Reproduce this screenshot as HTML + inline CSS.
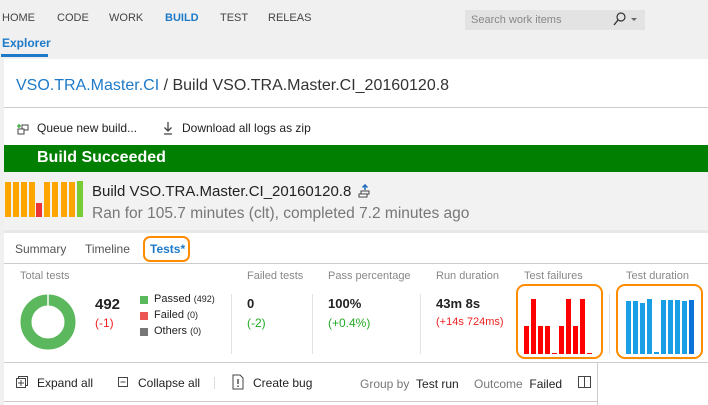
<!DOCTYPE html>
<html><head><meta charset="utf-8"><style>
*{margin:0;padding:0;box-sizing:border-box}
body{width:708px;height:405px;overflow:hidden;background:#f0f0f0;font-family:"Segoe UI","Liberation Sans",sans-serif;position:relative;color:#222}
.a{position:absolute;white-space:nowrap}
.nav{font-size:11px;color:#444;top:12px}
</style></head><body>
<div class="a nav" style="left:2px">HOME</div>
<div class="a nav" style="left:57px">CODE</div>
<div class="a nav" style="left:109px">WORK</div>
<div class="a nav" style="left:165px;color:#1e7ac8;font-weight:bold">BUILD</div>
<div class="a nav" style="left:220px">TEST</div>
<div class="a nav" style="left:268px">RELEAS</div>
<div class="a" style="left:465px;top:10px;width:180px;height:20px;background:#e3e3e3"></div>
<div class="a" style="left:471px;top:14px;font-size:11px;color:#888">Search work items</div>
<svg class="a" style="left:612px;top:11px" width="30" height="16"><circle cx="9" cy="6" r="4" fill="none" stroke="#333" stroke-width="1.2"/><line x1="6" y1="9" x2="2" y2="14" stroke="#333" stroke-width="1.4"/><path d="M19 7h6l-3 3z" fill="#666"/></svg>
<div class="a" style="left:2px;top:36px;font-size:12px;font-weight:bold;color:#1e7ac8">Explorer</div>
<div class="a" style="left:1px;top:54px;width:47px;height:3px;background:#1e7ac8"></div>
<div class="a" style="left:4px;top:59px;width:704px;height:346px;background:#fff"></div>
<div class="a" style="left:16px;top:77px;font-size:16px;color:#333"><span style="color:#1e7ac8">VSO.TRA.Master.CI</span> / Build VSO.TRA.Master.CI_20160120.8</div>
<div class="a" style="left:4px;top:107px;width:704px;height:1px;background:#ccc"></div>
<svg class="a" style="left:16px;top:122px" width="14" height="14"><path d="M1 4h4M3 2v4" stroke="#3a3" stroke-width="1.3"/><rect x="6" y="3" width="6" height="5" fill="none" stroke="#444"/><rect x="2" y="7" width="6" height="5" fill="#fff" stroke="#444"/></svg>
<div class="a" style="left:37px;top:121px;font-size:12px">Queue new build...</div>
<svg class="a" style="left:163px;top:121px" width="10" height="14"><path d="M5 1v9M1.5 6.5L5 10l3.5-3.5M1 13h8" stroke="#444" stroke-width="1.3" fill="none"/></svg>
<div class="a" style="left:182px;top:121px;font-size:12px">Download all logs as zip</div>
<div class="a" style="left:4px;top:145px;width:704px;height:27px;background:#007f00"></div>
<div class="a" style="left:37px;top:149px;font-size:16px;font-weight:bold;color:#fff">Build Succeeded</div>
<div class="a" style="left:4px;top:172px;width:704px;height:58px;background:#f2f2f2"></div>
<div class="a" style="left:5px;top:181px;width:80px;height:36px">
<div class="a" style="left:0;top:1px;width:6px;height:35px;background:#ffa500"></div>
<div class="a" style="left:8px;top:1px;width:6px;height:35px;background:#ffa500"></div>
<div class="a" style="left:16px;top:1px;width:6px;height:35px;background:#ffa500"></div>
<div class="a" style="left:24px;top:1px;width:6px;height:35px;background:#ffa500"></div>
<div class="a" style="left:31px;top:22px;width:6px;height:14px;background:#e33"></div>
<div class="a" style="left:39px;top:1px;width:6px;height:35px;background:#ffa500"></div>
<div class="a" style="left:47px;top:1px;width:6px;height:35px;background:#ffa500"></div>
<div class="a" style="left:56px;top:1px;width:6px;height:35px;background:#ffa500"></div>
<div class="a" style="left:64px;top:1px;width:6px;height:35px;background:#ffa500"></div>
<div class="a" style="left:72px;top:0;width:6px;height:36px;background:#7c3"></div>
</div>
<div class="a" style="left:92px;top:183px;font-size:15px;color:#222">Build VSO.TRA.Master.CI_20160120.8</div>
<svg class="a" style="left:358px;top:184px" width="14" height="16"><path d="M7 1v5M4.5 3.5L7 1l2.5 2.5" stroke="#1e6cb8" stroke-width="1.5" fill="none"/><rect x="3" y="7" width="8" height="3" fill="none" stroke="#444"/><rect x="1" y="10" width="8" height="3" fill="#fff" stroke="#444"/></svg>
<div class="a" style="left:92px;top:205px;font-size:15.5px;color:#777">Ran for 105.7 minutes (clt), completed 7.2 minutes ago</div>
<div class="a" style="left:4px;top:230px;width:704px;height:3px;background:#e8e8e8"></div>
<div class="a" style="left:15px;top:242px;font-size:12px;color:#555">Summary</div>
<div class="a" style="left:85px;top:242px;font-size:12px;color:#555">Timeline</div>
<div class="a" style="left:143px;top:236px;width:47px;height:26px;border:2px solid #ff8c00;border-radius:7px"></div>
<div class="a" style="left:150px;top:242px;font-size:12px;font-weight:bold;color:#1e7ac8">Tests*</div>
<div class="a" style="left:4px;top:263px;width:704px;height:1px;background:#ccc"></div>
<div class="a" style="left:20px;top:270px;font-size:11px;color:#888">Total tests</div>
<svg class="a" style="left:20px;top:294px" width="56" height="56"><circle cx="28" cy="28" r="22" fill="none" stroke="#5cb85c" stroke-width="11"/><line x1="28" y1="0" x2="28" y2="12" stroke="#fff" stroke-width="1.5"/></svg>
<div class="a" style="left:95px;top:296px;font-size:15px;font-weight:bold">492</div>
<div class="a" style="left:95px;top:316px;font-size:12px;color:#e22">(-1)</div>
<div class="a" style="left:140px;top:296px;width:8px;height:8px;background:#5cb85c"></div>
<div class="a" style="left:140px;top:312px;width:8px;height:8px;background:#ed5454"></div>
<div class="a" style="left:140px;top:328px;width:8px;height:8px;background:#777"></div>
<div class="a" style="left:154px;top:293px;font-size:11px">Passed <span style="font-size:9px">(492)</span></div>
<div class="a" style="left:154px;top:309px;font-size:11px">Failed <span style="font-size:9px">(0)</span></div>
<div class="a" style="left:154px;top:325px;font-size:11px">Others <span style="font-size:9px">(0)</span></div>
<div class="a" style="left:231px;top:294px;width:1px;height:60px;background:#e3e3e3"></div>
<div class="a" style="left:312px;top:294px;width:1px;height:60px;background:#e3e3e3"></div>
<div class="a" style="left:420px;top:294px;width:1px;height:60px;background:#e3e3e3"></div>
<div class="a" style="left:609px;top:294px;width:1px;height:60px;background:#e3e3e3"></div>
<div class="a" style="left:247px;top:270px;font-size:11px;color:#888">Failed tests</div>
<div class="a" style="left:247px;top:296px;font-size:13px;font-weight:bold">0</div>
<div class="a" style="left:247px;top:316px;font-size:12px;color:#2a2">(-2)</div>
<div class="a" style="left:328px;top:270px;font-size:11px;color:#888">Pass percentage</div>
<div class="a" style="left:328px;top:296px;font-size:13px;font-weight:bold">100%</div>
<div class="a" style="left:328px;top:316px;font-size:12px;color:#2a2">(+0.4%)</div>
<div class="a" style="left:436px;top:270px;font-size:11px;color:#888">Run duration</div>
<div class="a" style="left:436px;top:296px;font-size:13px;font-weight:bold">43m 8s</div>
<div class="a" style="left:436px;top:316px;font-size:11px;color:#e22">(+14s 724ms)</div>
<div class="a" style="left:524px;top:270px;font-size:11px;color:#888">Test failures</div>
<div class="a" style="left:626px;top:270px;font-size:11px;color:#888">Test duration</div>
<div class="a" style="left:516px;top:284px;width:87px;height:75px;border:2px solid #ff8c00;border-radius:9px"></div>
<div class="a" style="left:616px;top:284px;width:87px;height:75px;border:2px solid #ff8c00;border-radius:9px"></div>
<svg class="a" style="left:524px;top:296px" width="80" height="60">
<g fill="#f00"><rect x="0" y="30" width="5" height="28"/><rect x="7" y="3" width="5" height="55"/><rect x="14" y="30" width="5" height="28"/><rect x="21" y="30" width="5" height="28"/><rect x="28" y="57" width="5" height="1"/><rect x="35" y="30" width="5" height="28"/><rect x="42" y="3" width="5" height="55"/><rect x="49" y="30" width="5" height="28"/><rect x="56" y="3" width="5" height="55"/><rect x="63" y="57" width="5" height="1"/></g></svg>
<svg class="a" style="left:626px;top:296px" width="80" height="60">
<g fill="#1a9ee6"><rect x="0" y="5" width="5" height="53"/><rect x="7" y="5" width="5" height="53"/><rect x="14" y="7" width="5" height="51"/><rect x="21" y="3" width="5" height="55"/><rect x="28" y="56" width="5" height="2"/><rect x="35" y="4" width="5" height="54"/><rect x="42" y="4" width="5" height="54"/><rect x="49" y="4" width="5" height="54"/><rect x="56" y="5" width="5" height="53"/><rect x="63" y="4" width="5" height="54" fill="#0a72d8"/></g></svg>
<div class="a" style="left:4px;top:362px;width:704px;height:1px;background:#ccc"></div>
<div class="a" style="left:597px;top:362px;width:1px;height:43px;background:#ccc"></div>
<div class="a" style="left:4px;top:401px;width:594px;height:1px;background:#ccc"></div>
<svg class="a" style="left:16px;top:376px" width="12" height="12"><rect x="2.5" y="0.5" width="9" height="9" fill="none" stroke="#444"/><rect x="0.5" y="2.5" width="9" height="9" fill="#fff" stroke="#444"/><path d="M5 4v6M2 7h6" stroke="#444"/></svg>
<div class="a" style="left:37px;top:376px;font-size:12px">Expand all</div>
<svg class="a" style="left:118px;top:377px" width="12" height="12"><rect x="0.5" y="0.5" width="9" height="9" fill="none" stroke="#444"/><path d="M2.5 5h5" stroke="#444"/></svg>
<div class="a" style="left:138px;top:376px;font-size:12px">Collapse all</div>
<div class="a" style="left:214px;top:377px;width:1px;height:12px;background:#ddd"></div>
<svg class="a" style="left:232px;top:374px" width="12" height="16"><path d="M1 1h7l3 3v11H1z" fill="none" stroke="#444"/><path d="M6 5v5M6 11.5v1.5" stroke="#444" stroke-width="1.4"/></svg>
<div class="a" style="left:253px;top:376px;font-size:12px">Create bug</div>
<div class="a" style="left:360px;top:377px;font-size:12px;color:#777">Group by <span style="color:#222">&nbsp;Test run</span></div>
<div class="a" style="left:474px;top:377px;font-size:12px;color:#777">Outcome <span style="color:#222">&nbsp;Failed</span></div>
<svg class="a" style="left:578px;top:376px" width="14" height="13"><rect x="0.5" y="0.5" width="12" height="11" fill="none" stroke="#444"/><path d="M6.5 0v12" stroke="#444"/></svg>
</body></html>
